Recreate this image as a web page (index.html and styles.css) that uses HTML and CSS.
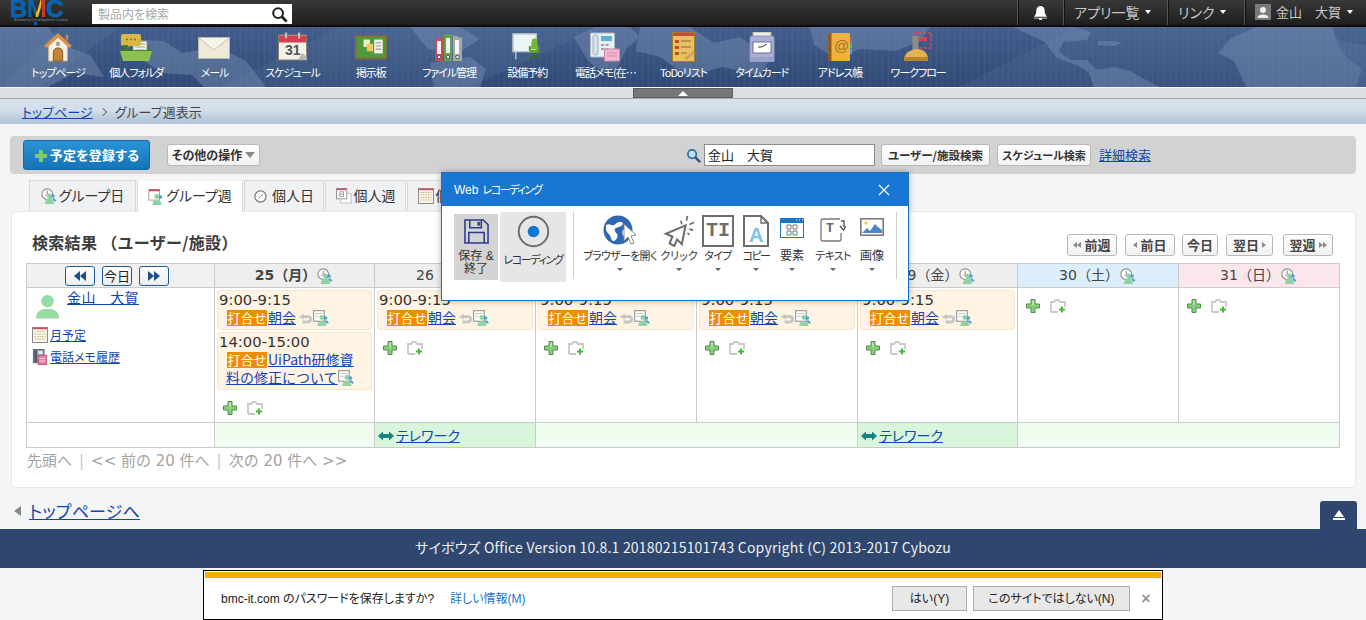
FILE: index.html
```html
<!DOCTYPE html>
<html lang="ja">
<head>
<meta charset="utf-8">
<title>グループ週表示</title>
<link rel="stylesheet" href="styles.css">
</head>
<body>
<svg class="defs" aria-hidden="true">
  <symbol id="i-group-clock" viewBox="0 0 18 18">
    <circle cx="7" cy="7" r="6" fill="#fff" stroke="#8a8a8a" stroke-width="1.2"/>
    <path d="M7 3v4l-2 2" fill="none" stroke="#777" stroke-width="1"/>
    <circle cx="9.5" cy="9" r="2.8" fill="#8fd3a0"/>
    <path d="M4.5 18c0-4 2-5.500 5-5.500s5 1.500 5 5.500z" fill="#8fd3a0"/>
    <circle cx="13.500" cy="9" r="2" fill="#4f9fd4"/>
    <path d="M12 12.500l3-1 2.500 3-2 1z" fill="#4f9fd4"/>
  </symbol>
  <symbol id="i-group-doc" viewBox="0 0 18 18">
    <rect x=".7" y=".7" width="12" height="12" fill="#fff" stroke="#a0a0a0" stroke-width="1.400"/>
    <path d="M2.500 4h8M2.500 7h4" stroke="#bdbdbd"/>
    <circle cx="10" cy="8.500" r="2.800" fill="#8fd3a0"/>
    <path d="M5 18c0-4 2-5.500 5-5.500s5 1.500 5 5.500z" fill="#8fd3a0"/>
    <circle cx="14" cy="9" r="2" fill="#4f9fd4"/>
    <path d="M12.500 12.500l3-1 2.500 3-2 1z" fill="#4f9fd4"/>
  </symbol>
  <symbol id="i-repeat" viewBox="0 0 15 10">
    <path d="M5 2.700h5a2.600 2.600 0 0 1 0 5.300H4.500" fill="none" stroke="#c6c6c6" stroke-width="2.800"/>
    <path d="M6 0v5.400L.5 2.700z" fill="#c6c6c6"/>
  </symbol>
  <symbol id="i-plus" viewBox="0 0 14 14">
    <path d="M5 .5h4v4.500h4.500v4H9v4.500H5V9H.5V5H5z" fill="#8ccb7e" stroke="#4e8f4a"/>
    <path d="M6 1.500h2v4.500H6z" fill="#b7e3a8"/>
  </symbol>
  <symbol id="i-folder-plus" viewBox="0 0 16 14">
    <path d="M1 13V3h3l1.500-2h3L10 3h5v5M1 13h7" fill="none" stroke="#c8c8c8" stroke-width="1.800"/>
    <path d="M9 10.500h6M12 7.500v6" stroke="#49b83f" stroke-width="2"/>
  </symbol>
  <symbol id="i-month" viewBox="0 0 16 16">
    <rect x=".5" y=".5" width="15" height="15" fill="#f8f5e8" stroke="#8c8c8c"/>
    <path d="M1 1.500h14" stroke="#d9485b" stroke-width="1.400"/>
    <path d="M2.500 4.500h11M2.500 7h11M2.500 9.500h11M2.500 12h11" stroke="#c9b98d" stroke-dasharray="1.500 1"/>
  </symbol>
  <symbol id="i-phonememo" viewBox="0 0 16 18">
    <rect x=".5" y=".5" width="12" height="15" fill="#8795a3" stroke="#56616c"/>
    <rect x="1.500" y="1.500" width="3" height="13" fill="#4f5b66"/>
    <rect x="6" y="2" width="5" height="4" fill="#dfe7ef"/>
    <rect x="6" y="7" width="9.500" height="10.500" fill="#e77fa2" stroke="#b8557b"/>
    <path d="M7.500 10.500h6.500M7.500 13.500h6.500" stroke="#fbdde8"/>
  </symbol>
  <symbol id="i-telework" viewBox="0 0 16 10">
    <path d="M0 5l5-4.500V3h6V.500L16 5l-5 4.500V7H5v2.500z" fill="#12857f"/>
  </symbol>
</svg>

<header class="topbar">
  <div class="logo"><div class="logo-mark"><span class="lb">B</span><span class="lm">M</span><span class="lb">C</span></div><div class="logo-sub">Business Development Center</div><i class="logo-dot"></i></div>
  <div class="global-search">
    <span class="gs-text">製品内を検索</span>
    <svg class="gs-icon" viewBox="0 0 18 18"><circle cx="7.500" cy="7.500" r="5.200" fill="none" stroke="#222" stroke-width="2.200"/><path d="M11.500 11.500l5 5" stroke="#222" stroke-width="3"/></svg>
  </div>
  <div class="top-right">
    <div class="top-cell bell"><svg class="bell-icon" viewBox="0 0 16 16"><path d="M8 1c-3 0-4.500 2.500-4.500 5.500 0 3-1 4.500-2.500 6h14c-1.500-1.500-2.500-3-2.500-6C12.500 3.500 11 1 8 1z" fill="#fff"/><path d="M1 13.500h14v1H1zM6.500 14.500h3V16h-3z" fill="#eee"/></svg></div>
    <div class="top-cell apps">アプリ一覧<i class="caret"></i></div>
    <div class="top-cell links">リンク<i class="caret"></i></div>
    <div class="top-cell me"><svg class="me-icon" viewBox="0 0 16 16"><rect width="16" height="16" fill="#7a7a7a"/><circle cx="8" cy="6" r="3" fill="#eee"/><path d="M2.500 14c.5-3 3-3.500 5.500-3.500s5 .5 5.500 3.500z" fill="#eee"/></svg>金山　大賀<i class="caret"></i></div>
  </div>
</header>

<nav class="appnav">
  <svg class="map" viewBox="0 0 1366 60" preserveAspectRatio="none" aria-hidden="true">
    <path d="M220 60L340 0h260L470 60zM960 60L1075 0h340v60zM0 60L60 0h60L40 60z" fill="#6b86ad" opacity=".16"/>
    <g fill="#7d94b8" opacity=".42">
      <path d="M0 0h48l14 18 28 10 14 22-30-4-26 14H0z"/>
      <path d="M128 12l36 2 18 12 36-6 28 14 20 26h-62l-12-12-30-2-24-16z"/>
      <path d="M410 0h50l20 12-22 14-30-4zM430 36l40-6 16 12-6 18h-46z"/>
      <path d="M574 10l22-10h34l10 10-14 12-8 18-14 6-14-10-8-12z"/>
      <path d="M640 0h50l24 16 26-6 30 22-10 16-38-8-34 10-28-20-24-6z"/>
      <path d="M810 0h120l-10 14-24 10-36-2-24 10-22-14z"/>
      <path d="M1013 0h62l16 5-4 8-24 2-4 10 12 8 16 0 10 10 10 6-10 2-18-12-22-8-12-16z"/>
      <path d="M1098 14h16l8 2-8 3-16-1zM1088 44l26-4 16 4 18 10 12 6h-66z"/>
      <path d="M1230 12l26-12h76l6 16 8 14 16 12-6 18h-110l-12-26-16-8z"/>
      <path d="M1326 8l16 6 24 4v42h-22l-10-26z" opacity=".45"/>
    </g>
  </svg>
  <ul class="nav-list">
    <li class="nav-item">
      <svg class="nav-icon" viewBox="0 0 32 32"><path d="M6 14L16 4l10 10v17H6z" fill="#f4efe3" stroke="#c9b48a"/><path d="M1 15L16 1l15 14-3 2L16 6 4 17z" fill="#d9934a"/><path d="M24 3h3v7l-3-3z" fill="#c9843f"/><rect x="14" y="10" width="4" height="5" rx="2" fill="#9c9c9c"/><path d="M11 31V22a5 5 0 0 1 10 0v9z" fill="#c58438" stroke="#7f5420"/></svg>
      <span class="nav-label">トップページ</span></li>
    <li class="nav-item">
      <svg class="nav-icon nav-wide" viewBox="0 0 32 30"><rect x="13" y="9" width="14" height="14" fill="#f5f2df" stroke="#888"/><path d="M15 12h10M15 15h10M15 18h10" stroke="#8aa"/><path d="M3 2h16a2 2 0 0 1 2 2v8a2 2 0 0 1-2 2H10l-3 4v-4H3a2 2 0 0 1-2-2V4a2 2 0 0 1 2-2z" fill="#d9b847"/><circle cx="7" cy="7.500" r="1" fill="#8a6f12"/><circle cx="11" cy="7.500" r="1" fill="#8a6f12"/><circle cx="15" cy="7.500" r="1" fill="#8a6f12"/><path d="M3 13h5l2 5h18v-5h2v5h2l-3 11H3L0 18h3z" fill="#3d7a2a" opacity=".9"/><path d="M0 19h32l-3 10H3z" fill="#8cc152"/></svg>
      <span class="nav-label">個人フォルダ</span></li>
    <li class="nav-item">
      <svg class="nav-icon nav-wide" viewBox="0 0 32 24"><rect x=".5" y="2.500" width="31" height="21" fill="#efe9d8" stroke="#b8b8b0"/><path d="M1 3l15 12L31 3" fill="#f7f3e6" stroke="#c8c2ac"/></svg>
      <span class="nav-label">メール</span></li>
    <li class="nav-item">
      <svg class="nav-icon" viewBox="0 0 30 30"><rect x=".5" y="3" width="28" height="25" fill="#f4f1e6" stroke="#8a7f70"/><rect x="1" y="3.500" width="27" height="7" fill="#d3404f"/><rect x="7" y=".5" width="2" height="6" fill="#ddd" stroke="#777" stroke-width=".5"/><rect x="20" y=".5" width="2" height="6" fill="#ddd" stroke="#777" stroke-width=".5"/><text x="7" y="23" class="svg-31">31</text><path d="M20 28l4-7 5 4v3z" fill="#b5b5b5"/></svg>
      <span class="nav-label">スケジュール</span></li>
    <li class="nav-item">
      <svg class="nav-icon nav-wide" viewBox="0 0 30 24"><rect x=".8" y="1.800" width="28.400" height="21" fill="#4f9a3b" stroke="#8a6a35" stroke-width="1.600"/><rect x="8" y="5" width="6" height="7" fill="#f6ecc6"/><rect x="11" y="9" width="6" height="7" fill="#efc65d"/><rect x="18" y="5" width="8" height="13" fill="#eef1e6"/><path d="M19.500 8h5M19.500 11h5M19.500 14h5" stroke="#999"/></svg>
      <span class="nav-label">掲示板</span></li>
    <li class="nav-item">
      <svg class="nav-icon" viewBox="0 0 30 30"><path d="M1 7l8-2v24H1z" fill="#c94a5e"/><path d="M10 3l8-1v27h-8z" fill="#5da644"/><path d="M19 3l9 3v23h-9z" fill="#a8a8a8"/><path d="M3 9h4v13H3zM12 6h4v15h-4zM21 8h4v14h-4z" fill="#f5f5f5"/><circle cx="5" cy="25" r="1.800" fill="#eee" stroke="#555"/><circle cx="14" cy="25" r="1.800" fill="#eee" stroke="#555"/><circle cx="23.500" cy="25" r="1.800" fill="#eee" stroke="#555"/></svg>
      <span class="nav-label">ファイル管理</span></li>
    <li class="nav-item">
      <svg class="nav-icon" viewBox="0 0 32 30"><rect x="1" y="1" width="25" height="19" fill="#eef3f6" stroke="#b8c3c9" stroke-width="1.500"/><path d="M4 20v8" stroke="#b8c3c9" stroke-width="1.500"/><path d="M21 9a3 3 0 0 1 6 0l1 8h-8z" fill="#6fb92f"/><rect x="18" y="14" width="2" height="5" fill="#4f8f20"/><rect x="28" y="14" width="2" height="5" fill="#4f8f20"/><rect x="19" y="18" width="10" height="3" fill="#5fa326"/><path d="M24 21v5M18 28l6-3 6 3" fill="none" stroke="#356f18" stroke-width="1.500"/></svg>
      <span class="nav-label">設備予約</span></li>
    <li class="nav-item">
      <svg class="nav-icon" viewBox="0 0 30 30"><rect x=".5" y="1" width="24" height="24" rx="1" fill="#e9eff3" stroke="#a9b8c2"/><rect x="3" y="3" width="5" height="20" rx="2" fill="#d7e1e8" stroke="#9eaeb9"/><rect x="11" y="4" width="11" height="5" fill="#5bb0d8"/><path d="M11 12h3v2h-3zM15.500 12h3v2h-3zM11 16h3v2h-3zM15.500 16h3v2h-3z" fill="#93a5b1"/><rect x="14.500" y="17" width="15" height="12" fill="#f4b7cf" stroke="#cf87a6"/><path d="M17 21h10M17 24h10" stroke="#d887aa"/></svg>
      <span class="nav-label">電話メモ(在…</span></li>
    <li class="nav-item">
      <svg class="nav-icon nav-narrow" viewBox="0 0 24 30"><rect x=".5" y=".5" width="22" height="29" fill="#e9c063" stroke="#a67b28"/><rect x="1" y="1" width="21" height="3" fill="#c44848"/><path d="M3 8h4v3H3zM3 14h4v3H3zM3 20h4v3H3z" fill="#c24a2e"/><path d="M9 9h10M9 15h10M9 21h6" stroke="#8a6c2c"/><path d="M12 26l9-7 2 2-8 7z" fill="#c9a563"/></svg>
      <span class="nav-label">ToDoリスト</span></li>
    <li class="nav-item">
      <svg class="nav-icon" viewBox="0 0 30 30"><rect x="6" y="0" width="18" height="9" fill="#f0efe3" stroke="#b0ae9c"/><rect x="3" y="4" width="24" height="26" rx="2" fill="#aab0d4" stroke="#8e95bd"/><rect x="6" y="10" width="18" height="11" fill="#fff" stroke="#6b6f96"/><path d="M15 15l5-3M15 15h-4" stroke="#444"/><rect x="3" y="25" width="24" height="5" fill="#9aa0c8"/></svg>
      <span class="nav-label">タイムカード</span></li>
    <li class="nav-item">
      <svg class="nav-icon" viewBox="0 0 26 30"><rect x="1" y="1" width="22" height="28" rx="1" fill="#efb240"/><rect x="1" y="1" width="3.500" height="28" fill="#8f5e1f"/><rect x="23" y="5" width="2" height="5" fill="#d9534f"/><rect x="23" y="11" width="2" height="5" fill="#5cb85c"/><rect x="23" y="17" width="2" height="5" fill="#5b9bd5"/><text x="7" y="19" class="svg-at">@</text></svg>
      <span class="nav-label">アドレス帳</span></li>
    <li class="nav-item">
      <svg class="nav-icon" viewBox="0 0 30 30"><rect x="11" y="1" width="17" height="15" fill="none" stroke="#d9485b" stroke-width="1.600" stroke-dasharray="3 1.500"/><rect x="14" y="5" width="10" height="4" fill="#c9485b"/><rect x="9.500" y="4" width="6" height="14" fill="#8c8c80"/><path d="M1 29c0-7 4-11 13-12 9 1 11 5 11 12z" fill="#e4b24e"/><rect x="1" y="25" width="24" height="4" fill="#b9852a"/></svg>
      <span class="nav-label">ワークフロー</span></li>
  </ul>
</nav>

<div class="strip"><button class="strip-handle" type="button" aria-label="閉じる"><i></i></button></div>
<div class="crumbs"><a href="#">トップページ</a><span class="crumb-sep"></span><span>グループ週表示</span></div>

<main class="main">
  <section class="toolbar">
    <a class="primary" href="#"><svg class="primary-plus" viewBox="0 0 14 14"><path d="M5 1h4v4h4v4H9v4H5V9H1V5h4z" fill="#7ccb6a"/></svg>予定を登録する</a>
    <button class="btn more" type="button">その他の操作<i class="more-caret"></i></button>
    <div class="tb-search">
      <svg class="tb-mag" viewBox="0 0 16 16"><circle cx="6.500" cy="6.500" r="4.500" fill="#bfe0f5" stroke="#2d6f9f" stroke-width="1.800"/><path d="M10 10l5 5" stroke="#2d4f78" stroke-width="2.600"/></svg>
      <div class="tb-input">金山　大賀</div>
      <button class="btn b-user" type="button">ユーザー/施設検索</button>
      <button class="btn b-sched" type="button">スケジュール検索</button>
      <a class="tb-link" href="#">詳細検索</a>
    </div>
  </section>

  <div class="tabs">
    <div class="tab t1"><svg class="ic16"><use href="#i-group-clock"/></svg><span>グループ日</span></div>
    <div class="tab t2 active"><svg class="ic16" viewBox="0 0 18 18"><rect x="1" y=".5" width="12" height="12" fill="#fff" stroke="#999"/><path d="M1 1.500h12" stroke="#d9485b" stroke-width="2"/><circle cx="10" cy="8.500" r="2.800" fill="#8fd3a0"/><path d="M5 18c0-4 2-5.500 5-5.500s5 1.500 5 5.500z" fill="#8fd3a0"/><circle cx="14" cy="9" r="2" fill="#4f9fd4"/></svg><span>グループ週</span></div>
    <div class="tab t3"><svg class="ic14" viewBox="0 0 14 14"><circle cx="7" cy="7" r="6" fill="#fff" stroke="#7d7d7d" stroke-width="1.400"/><path d="M7 7l3-2.500M7 7l-2 2" stroke="#777"/></svg><span>個人日</span></div>
    <div class="tab t4"><svg class="ic16" viewBox="0 0 17 17"><rect x="5" y="6" width="11" height="10" fill="#fff" stroke="#bbb"/><rect x=".5" y=".5" width="11" height="11" fill="#fff" stroke="#8e8e8e"/><path d="M1 1.500h10" stroke="#d9485b" stroke-width="1.600"/><path d="M4 4v5h4V4zM4 6.500h4" fill="none" stroke="#888" stroke-width=".8"/></svg><span>個人週</span></div>
    <div class="tab t5"><svg class="ic16"><use href="#i-month"/></svg><span>個人月</span></div>
  </div>

  <section class="card">
    <div class="card-head">
      <h2 class="card-title">検索結果 （ユーザー/施設）</h2>
      <div class="date-nav">
        <button class="btn dn w50" type="button"><i class="tri-l dbl"></i>前週</button>
        <button class="btn dn w50 g8" type="button"><i class="tri-l"></i>前日</button>
        <button class="btn dn w36 g7" type="button">今日</button>
        <button class="btn dn w47 g8" type="button">翌日<i class="tri-r"></i></button>
        <button class="btn dn w50 g10" type="button">翌週<i class="tri-r dbl"></i></button>
      </div>
    </div>

    <table class="sched">
      <colgroup><col class="c0"><col class="c1"><col class="c2"><col class="c2"><col class="c2"><col class="c1"><col class="c2"><col class="c2"></colgroup>
      <thead>
        <tr>
          <th class="h-nav">
            <div class="wk-btns">
              <button class="wk" type="button"><i class="wk-l"></i><i class="wk-l"></i></button>
              <button class="wk today" type="button">今日</button>
              <button class="wk" type="button"><i class="wk-r"></i><i class="wk-r"></i></button>
            </div>
          </th>
          <th class="h-day strong">25（月）<svg class="ic16 hic"><use href="#i-group-clock"/></svg></th>
          <th class="h-day">26（火）<svg class="ic16 hic"><use href="#i-group-clock"/></svg></th>
          <th class="h-day">27（水）<svg class="ic16 hic"><use href="#i-group-clock"/></svg></th>
          <th class="h-day">28（木）<svg class="ic16 hic"><use href="#i-group-clock"/></svg></th>
          <th class="h-day">29（金）<svg class="ic16 hic"><use href="#i-group-clock"/></svg></th>
          <th class="h-day sat">30（土）<svg class="ic16 hic"><use href="#i-group-clock"/></svg></th>
          <th class="h-day sun">31（日）<svg class="ic16 hic"><use href="#i-group-clock"/></svg></th>
        </tr>
      </thead>
      <tbody>
        <tr class="r-main">
          <td class="user-cell">
            <div class="user-top">
              <svg class="avatar" viewBox="0 0 24 26"><circle cx="12" cy="8" r="6.500" fill="#95dba5"/><path d="M0 26c0-7 4-9 8-10h8c4 1 8 3 8 10z" fill="#95dba5"/></svg>
              <a class="user-name" href="#">金山　大賀</a>
            </div>
            <div class="user-link"><svg class="ic16"><use href="#i-month"/></svg><a href="#">月予定</a></div>
            <div class="user-link"><svg class="ic16"><use href="#i-phonememo"/></svg><a href="#">電話メモ履歴</a></div>
          </td>
          <td class="day">
            <div class="ev"><div class="ev-time">9:00-9:15</div><div class="ev-body"><span class="tag">打合せ</span><a href="#">朝会</a><svg class="ic-rep"><use href="#i-repeat"/></svg><svg class="ic16"><use href="#i-group-doc"/></svg></div></div>
            <div class="ev"><div class="ev-time">14:00-15:00</div><div class="ev-body"><span class="tag">打合せ</span><a href="#">UiPath研修資料の修正について</a><svg class="ic16"><use href="#i-group-doc"/></svg></div></div>
            <div class="adds"><svg class="ic-plus"><use href="#i-plus"/></svg><svg class="ic-fold"><use href="#i-folder-plus"/></svg></div>
          </td>
          <td class="day">
            <div class="ev"><div class="ev-time">9:00-9:15</div><div class="ev-body"><span class="tag">打合せ</span><a href="#">朝会</a><svg class="ic-rep"><use href="#i-repeat"/></svg><svg class="ic16"><use href="#i-group-doc"/></svg></div></div>
            <div class="adds"><svg class="ic-plus"><use href="#i-plus"/></svg><svg class="ic-fold"><use href="#i-folder-plus"/></svg></div>
          </td>
          <td class="day">
            <div class="ev"><div class="ev-time">9:00-9:15</div><div class="ev-body"><span class="tag">打合せ</span><a href="#">朝会</a><svg class="ic-rep"><use href="#i-repeat"/></svg><svg class="ic16"><use href="#i-group-doc"/></svg></div></div>
            <div class="adds"><svg class="ic-plus"><use href="#i-plus"/></svg><svg class="ic-fold"><use href="#i-folder-plus"/></svg></div>
          </td>
          <td class="day">
            <div class="ev"><div class="ev-time">9:00-9:15</div><div class="ev-body"><span class="tag">打合せ</span><a href="#">朝会</a><svg class="ic-rep"><use href="#i-repeat"/></svg><svg class="ic16"><use href="#i-group-doc"/></svg></div></div>
            <div class="adds"><svg class="ic-plus"><use href="#i-plus"/></svg><svg class="ic-fold"><use href="#i-folder-plus"/></svg></div>
          </td>
          <td class="day">
            <div class="ev"><div class="ev-time">9:00-9:15</div><div class="ev-body"><span class="tag">打合せ</span><a href="#">朝会</a><svg class="ic-rep"><use href="#i-repeat"/></svg><svg class="ic16"><use href="#i-group-doc"/></svg></div></div>
            <div class="adds"><svg class="ic-plus"><use href="#i-plus"/></svg><svg class="ic-fold"><use href="#i-folder-plus"/></svg></div>
          </td>
          <td class="day"><div class="adds"><svg class="ic-plus"><use href="#i-plus"/></svg><svg class="ic-fold"><use href="#i-folder-plus"/></svg></div></td>
          <td class="day"><div class="adds"><svg class="ic-plus"><use href="#i-plus"/></svg><svg class="ic-fold"><use href="#i-folder-plus"/></svg></div></td>
        </tr>
        <tr class="r-banner">
          <td></td>
          <td class="b-pale"></td>
          <td class="b-on"><svg class="ic-tele"><use href="#i-telework"/></svg><a href="#">テレワーク</a></td>
          <td class="b-pale" colspan="2"></td>
          <td class="b-on"><svg class="ic-tele"><use href="#i-telework"/></svg><a href="#">テレワーク</a></td>
          <td class="b-pale" colspan="2"></td>
        </tr>
      </tbody>
    </table>
    <div class="pager">先頭へ<span class="bar">|</span>&lt;&lt; 前の 20 件へ<span class="bar">|</span>次の 20 件へ &gt;&gt;</div>
  </section>

  <div class="back-row">
    <i class="back-tri"></i><a class="back-link" href="#">トップページへ</a>
    <button class="to-top" type="button" aria-label="ページ上部へ"><i></i></button>
  </div>
</main>

<footer class="footer">サイボウズ Office Version 10.8.1 20180215101743 Copyright (C) 2013-2017 Cybozu</footer>

<aside class="recorder">
  <div class="rec-head"><span class="rec-title">Web<span class="tight">レコーディング</span></span>
    <svg class="rec-close" viewBox="0 0 12 12"><path d="M1 1l10 10M11 1L1 11" stroke="#fff" stroke-width="1.100"/></svg>
  </div>
  <div class="rec-body">
    <div class="rec-tool save">
      <svg class="ri-save" viewBox="0 0 26 26"><path d="M1 1h19l5 5v19H1z" fill="none" stroke="#2c3a8c" stroke-width="1.600"/><path d="M6 1v8h12V1M5 25V14h16v11" fill="none" stroke="#2c3a8c" stroke-width="1.600"/><rect x="14" y="3" width="2.500" height="4" fill="#2c3a8c"/></svg>
      <span>保存 &amp;<br>終了</span>
    </div>
    <div class="rec-tool record">
      <svg class="ri-rec" viewBox="0 0 34 34"><circle cx="17" cy="17" r="15.200" fill="none" stroke="#6d6d6d" stroke-width="2"/><circle cx="17" cy="17" r="6" fill="#0f78d0"/></svg>
      <span class="tight">レコーディング</span>
    </div>
    <div class="rec-sep"></div>
    <div class="rec-item w-open"><svg class="ri ri-globe" viewBox="0 0 34 32"><circle cx="15" cy="15" r="14.500" fill="#2d68b0"/><path d="M3 10c4-2 5 1 8 0s3-4 7-3 1 4-2 5-5 1-4 4 4 3 2 7-5 4-6 0-4-5-5-8zM20 15c3-1 6 0 7 2s-2 6-5 5-3-6-2-7z" fill="#fff"/><path d="M21 9l0 17 4-4 3 7 3-1-3-7 5-1z" fill="#fff" stroke="#8a8a8a"/></svg><span class="ri-label cond">ブラウザーを開く</span><i class="dd"></i></div>
    <div class="rec-item w-click"><svg class="ri ri-click" viewBox="0 0 34 34"><path d="M24 11L3 20l7 3-3 7 5 3 3-7 5 5z" fill="#fff" stroke="#6d6d6d" stroke-width="2.200"/><path d="M19 6l1 4M26 1l-1 5M33 8l-5 2M32 16l-4-1M28 21l-2-2" stroke="#6d6d6d" stroke-width="1.800"/></svg><span class="ri-label">クリック</span><i class="dd"></i></div>
    <div class="rec-item w-type"><div class="ri-type"><span>TI</span></div><span class="ri-label cond">タイプ</span><i class="dd"></i></div>
    <div class="rec-item w-copy"><div class="ri-copywrap"><svg class="ri-copy" viewBox="0 0 26 32"><path d="M1 1h17l7 7v23H1z" fill="#fff" stroke="#6d6d6d" stroke-width="2"/><path d="M18 1v7h7" fill="none" stroke="#6d6d6d" stroke-width="1.400"/></svg><span class="ri-a">A</span></div><span class="ri-label tight-2">コピー</span><i class="dd"></i></div>
    <div class="rec-item w-elem"><svg class="ri-win" viewBox="0 0 24 20"><rect x=".5" y=".5" width="23" height="19" fill="#fff" stroke="#2270c2"/><rect width="24" height="5" fill="#1a74c4"/><path d="M7 7h4v4H7zM13 7h4v4h-4zM7 13h4v4H7zM13 13h4v4h-4z" fill="none" stroke="#777"/><path d="M16 2h1M19 2h1M22 2h1" stroke="#fff"/></svg><span class="ri-label big">要素</span><i class="dd"></i></div>
    <div class="rec-item w-text"><div class="ri-textwrap"><svg class="ri-text" viewBox="0 0 26 24"><path d="M20 1H3a2 2 0 0 0-2 2v18a2 2 0 0 0 2 2h16a2 2 0 0 0 2-2v-6" fill="none" stroke="#7a7a7a" stroke-width="1.300"/><path d="M21 3h3v6M20 8l3.500 4L26 8" fill="none" stroke="#555" stroke-width="1.400"/></svg><span class="ri-t">T</span></div><span class="ri-label cond">テキスト</span><i class="dd"></i></div>
    <div class="rec-item w-img"><svg class="ri-pic" viewBox="0 0 24 18"><rect x=".8" y=".8" width="22.400" height="16.400" fill="#fff" stroke="#7a7a7a" stroke-width="1.600"/><circle cx="6" cy="5" r="1.800" fill="#f2c94c"/><path d="M2 15l5-5 3 3 5-7 3 3 4 3v3z" fill="#4f86c6"/></svg><span class="ri-label big">画像</span><i class="dd"></i></div>
    <div class="rec-sep end"></div>
  </div>
</aside>

<aside class="savebar">
  <span class="sb-text">bmc-it.com のパスワードを保存しますか?</span>
  <a class="sb-link" href="#">詳しい情報(M)</a>
  <button class="sb-btn yes" type="button">はい(Y)</button>
  <button class="sb-btn no" type="button">このサイトではしない(N)</button>
  <span class="sb-x">×</span>
</aside>
</body>
</html>
```

FILE: styles.css
```css
* { box-sizing: border-box; }
html, body { margin: 0; padding: 0; height: 620px; overflow: hidden; }
body {
  position: relative;
  background: #f4f5f7;
  color: #333;
  font-family: "Noto Sans CJK JP", "Liberation Sans", sans-serif;
  font-feature-settings: "palt";
  font-size: 13px;
  line-height: 18px;
}
a { color: #0f47b0; text-decoration: underline; }
button { font: inherit; font-feature-settings: inherit; margin: 0; cursor: pointer; }
.defs { width: 0; height: 0; position: absolute; }
ul { list-style: none; margin: 0; padding: 0; }

/* top bar */
.topbar {
  height: 27px;
  display: flex;
  align-items: flex-start;
  background: linear-gradient(#383838, #1e1e1e);
  border-bottom: 2px solid #0c0c0c;
}
.logo { width: 92px; padding-left: 10px; height: 25px; position: relative; }
.logo-mark { font: 900 24px/18px "Liberation Sans", sans-serif; letter-spacing: -.5px; color: #0a62ae; -webkit-text-stroke: .8px #0a62ae; }
.lm { background: linear-gradient(90deg, #0a62ae 45%, #eebc1d 45% 72%, #c8392b 72%); -webkit-background-clip: text; background-clip: text; color: transparent; -webkit-text-stroke: 0; }
.logo-sub { font: 4px/4px "Liberation Sans", sans-serif; color: #7f8fa8; padding-left: 4px; white-space: nowrap; }
.logo-dot { position: absolute; left: 34px; top: 22px; width: 3px; height: 3px; background: #0a62ae; }
.global-search { width: 200px; height: 20px; margin-top: 4px; background: #fff; display: flex; align-items: center; justify-content: space-between; padding: 0 4px 0 6px; }
.gs-text { color: #a8a8a8; font-size: 12px; }
.gs-icon { width: 17px; height: 17px; }
.top-right { margin-left: auto; display: flex; height: 25px; color: #c8c8c8; font-size: 14px; }
.top-cell { display: flex; align-items: center; height: 25px; border-left: 1px solid #555; box-shadow: inset 1px 0 0 #111; padding: 0 0 2px 10px; }
.bell { width: 46px; justify-content: center; padding: 0; }
.bell-icon { width: 15px; height: 15px; }
.apps { width: 104px; }
.links { width: 77px; }
.me { width: 122px; font-size: 13px; }
.me-icon { width: 16px; height: 16px; margin-right: 5px; }
.caret { width: 0; height: 0; margin-left: 6px; border: 3px solid transparent; border-top: 4px solid #fff; border-bottom: 0; }

/* app nav */
.appnav {
  position: relative;
  height: 60px;
  overflow: hidden;
  background:
    repeating-linear-gradient(90deg, rgba(255,255,255,.045) 0 1px, transparent 1px 6px),
    linear-gradient(#435e8d, #304a77);
}
.map { position: absolute; inset: 0; width: 100%; height: 60px; }
.nav-list { position: relative; display: flex; padding-left: 19px; }
.nav-item { width: 78.200px; height: 60px; display: flex; flex-direction: column; align-items: center; padding-top: 5px; }
.nav-icon { display: block; width: 30px; height: 30px; margin-bottom: 2px; }
.nav-wide { width: 32px; }
.nav-narrow { width: 24px; }
.nav-label { color: #fff; font-size: 11px; line-height: 16px; letter-spacing: -1px; white-space: nowrap; }
.svg-31 { font: 700 14px "Liberation Sans", sans-serif; fill: #555; }
.svg-at { font: 400 15px "Liberation Sans", sans-serif; fill: #a8741c; }

.strip { height: 12px; background: #dde0e2; border-top: 1px solid #f4f5f5; border-bottom: 1px solid #a9acaf; display: flex; justify-content: center; }
.strip-handle { width: 100px; height: 10px; padding: 0; border: 1px solid #5e5e5e; background: #777; display: flex; align-items: center; justify-content: center; }
.strip-handle i { width: 0; height: 0; border: 5px solid transparent; border-top: 0; border-bottom: 5px solid #fff; }

.crumbs {
  height: 25px;
  padding-left: 22px;
  display: flex;
  align-items: center;
  font-size: 13px;
  color: #444;
  background: linear-gradient(#d8e1ec, #d3deea 45%, #b9cadb 80%, #b5c6d8);
}
.crumb-sep { width: 6px; height: 6px; margin: 0 9px 0 7px; border-top: 1px solid #777; border-right: 1px solid #777; transform: rotate(45deg); }

/* main */
.main { padding: 12px 10px 0; }
.toolbar { height: 38px; background: #d2d2d2; border-radius: 4px; display: flex; align-items: center; padding-left: 13px; }
.primary { width: 127px; height: 30px; display: flex; align-items: center; justify-content: center; color: #fff; font-weight: 700; font-size: 13px; letter-spacing: .2px; text-decoration: none; border: 1px solid #1567a8; border-radius: 3px; background: linear-gradient(#2a93d6, #1474b8); }
.primary-plus { width: 14px; height: 14px; margin: 2px 2px 0 0; }
.btn { height: 22px; padding: 0 5px; white-space: nowrap; display: inline-flex; align-items: center; justify-content: center; color: #333; font-size: 12px; font-weight: 700; border: 1px solid #b9b9b9; border-radius: 3px; background: linear-gradient(#fff, #f2f2f2); }
.more { width: 93px; margin-left: 17px; }
.more-caret { width: 0; height: 0; margin-left: 3px; border: 5px solid transparent; border-top: 6px solid #8a8a8a; border-bottom: 0; }
.tb-search { margin-left: 426px; display: flex; align-items: center; }
.tb-mag { width: 15px; height: 15px; margin-right: 3px; }
.tb-input { width: 171px; height: 22px; padding-left: 3px; background: #fff; border: 1px solid #8b8b8b; font-size: 13px; line-height: 20px; color: #222; margin-right: 6px; }
.b-user { width: 109px; font-size: 11.500px; padding: 0; }
.b-sched { width: 94px; margin-left: 7px; font-size: 11px; padding: 0; }
.tb-link { margin-left: 8px; font-size: 13px; }

.tabs { display: flex; height: 31px; margin: 6px 0 0 19px; position: relative; z-index: 1; }
.tab { height: 31px; display: flex; align-items: center; justify-content: center; background: #f0f1f2; border: 1px solid #d8d8d8; border-bottom: 0; font-size: 14px; color: #333; white-space: nowrap; margin-right: 1px; gap: 2px; }
.tab span { margin-top: -3px; }
.tab.active { background: #fff; height: 32px; border-top-color: #f4f5f7; }
.t1 { width: 107px; } .t2 { width: 106px; } .t3 { width: 80px; } .t4 { width: 81px; } .t5 { width: 81px; }
.ic16 { width: 16px; height: 16px; flex: none; }
.ic14 { width: 13px; height: 13px; flex: none; margin-right: 3px; }

.card { margin-left: 1px; height: 277px; background: #fff; border: 1px solid #e8e8e8; border-radius: 5px; padding: 0 14px; }
.card-head { height: 51px; display: flex; justify-content: space-between; align-items: flex-start; }
.card-title { margin: 20px 0 0 6px; font-size: 16px; letter-spacing: .3px; line-height: 20px; font-weight: 700; color: #3c3c3c; font-feature-settings: normal; white-space: nowrap; }
.date-nav { display: flex; margin-top: 22px; margin-right: 8px; }
.dn { height: 22px; padding: 0; gap: 3px; font-size: 13px; font-weight: 700; color: #444; }
.w50 { width: 50px; } .w36 { width: 36px; } .w47 { width: 47px; }
.g7 { margin-left: 7px; } .g8 { margin-left: 8px; } .g10 { margin-left: 10px; }
.tri-l, .tri-r { width: 0; height: 0; border: 3px solid transparent; }
.tri-l { border-right: 4px solid #888; border-left: 0; }
.tri-r { border-left: 4px solid #888; border-right: 0; }
.tri-l.dbl { position: relative; margin-left: 4px; }
.tri-l.dbl::before { content: ""; position: absolute; left: -4px; top: -3px; border: 3px solid transparent; border-right: 4px solid #888; border-left: 0; }
.tri-r.dbl { position: relative; margin-right: 4px; }
.tri-r.dbl::after { content: ""; position: absolute; left: 0; top: -3px; border: 3px solid transparent; border-left: 4px solid #888; border-right: 0; }

.sched { width: 1314px; table-layout: fixed; border-collapse: collapse; font-size: 14px; }
.c0 { width: 188px; } .c1 { width: 160px; } .c2 { width: 161px; }
.sched th, .sched td { border: 1px solid #cacaca; padding: 0; }
.sched thead tr { height: 24px; }
.h-nav { background: #f1f1f1; }
.sched .h-day { padding-bottom: 2px; background: #eeeeee; font-family: "DejaVu Sans", "Noto Sans CJK JP", sans-serif; font-feature-settings: normal; font-weight: 400; font-size: 14px; color: #444; text-align: center; white-space: nowrap; }
.sched .h-day.strong { font-weight: 700; }
.sched .h-day.sat { background: #dcedfb; }
.sched .h-day.sun { background: #fbe6ec; }
.hic { vertical-align: -4px; margin: 0 1px; }
.wk-btns { display: flex; gap: 7px; padding-left: 38px; }
.wk { width: 30px; height: 20px; padding: 0; display: flex; align-items: center; justify-content: center; font-size: 13px; font-weight: 400; line-height: 17px; color: #222; border: 1px solid #1d5a92; border-radius: 3px; background: linear-gradient(#fff, #ececec); }
.wk-l, .wk-r { width: 0; height: 0; border: 5px solid transparent; }
.wk-l { border-right: 6px solid #1d4f86; border-left: 0; }
.wk-r { border-left: 6px solid #1d4f86; border-right: 0; }
.r-main { height: 135px; vertical-align: top; }
.r-banner { height: 25px; }
.user-cell { padding: 0 0 0 5px !important; }
.user-top { height: 39px; display: flex; padding-left: 4px; }
.avatar { width: 23px; height: 26px; margin: 5px 8px 0 0; flex: none; }
.user-name { font-size: 14px; line-height: 18px; margin-top: 0; letter-spacing: .4px; }
.user-link { height: 22px; display: flex; align-items: flex-start; font-size: 12px; line-height: 15px; }
.user-link a { margin-left: 2px; }
.day { padding: 2px !important; }
.ev { background: #fff3e3; border: 1px solid #fbe6cb; border-radius: 3px; padding: 0 0 3px 1px; margin-bottom: 2px; color: #333; font-feature-settings: normal; font-size: 14px; line-height: 18px; }
.ev-time { font-family: "DejaVu Sans", "Noto Sans CJK JP", sans-serif; font-size: 14.800px; height: 17px; line-height: 17px; }
.ev-body { padding: 0 13px 0 7px; line-height: 18px; }
.ev-body svg { vertical-align: -3px; }
.tag { background: #ef8c00; color: #fff; font-size: 13px; margin: 0 1px 0 1px; line-height: 16px; display: inline-block; width: 40px; text-align: center; }
.ic-rep { width: 15px; height: 10px; margin-left: 2px; vertical-align: -1px !important; }
.adds { display: flex; align-items: center; padding: 9px 0 0 6px; }
.ic-plus { width: 14px; height: 14px; flex: none; }
.ic-fold { width: 16px; height: 14px; flex: none; margin-left: 10px; }
.b-pale { background: #f0fdf0; }
.b-on { background: #d9f5dc; padding-left: 3px !important; }
.ic-tele { width: 16px; height: 10px; margin-right: 2px; }
.pager { margin: 3px 0 0 1px; font-family: "DejaVu Sans", "Noto Sans CJK JP", sans-serif; font-size: 15px; line-height: 20px; color: #a3a3a3; white-space: nowrap; font-feature-settings: normal; }
.bar { margin: 0 7px; color: #c8c8c8; }

.back-row { height: 41px; position: relative; display: flex; align-items: flex-start; padding: 13px 0 0 4px; }
.back-tri { width: 0; height: 0; margin: 5px 8px 0 0; border: 5px solid transparent; border-right: 7px solid #888; border-left: 0; }
.back-link { font-size: 17px; letter-spacing: .2px; line-height: 20px; }
.to-top { position: absolute; right: -1px; bottom: 0; width: 37px; height: 28px; padding: 0; border: 0; border-radius: 3px 3px 0 0; background: #2f476f; display: flex; flex-direction: column; align-items: center; justify-content: center; }
.to-top i { width: 12px; height: 9px; background: linear-gradient(#fff, #fff) bottom/12px 2px no-repeat; position: relative; }
.to-top i::before { content: ""; position: absolute; left: 1px; top: -1px; border: 5px solid transparent; border-top: 0; border-bottom: 7px solid #fff; }

.footer { height: 39px; background: #2f476f; color: #f0f0f0; font-size: 14px; letter-spacing: .2px; line-height: 36px; text-align: center; }

/* recorder window */
.recorder { position: absolute; left: 441px; top: 172px; width: 468px; height: 129px; background: #fff; border: 1px solid #1a6fc0; box-shadow: 0 0 6px rgba(0,0,0,.3); z-index: 5; font-family: "Liberation Sans", "Noto Sans CJK JP", sans-serif; }
.rec-head { height: 33px; background: #1976d2; color: #fff; font-size: 12px; display: flex; align-items: center; justify-content: space-between; padding: 0 18px 0 12px; }
.rec-title { display: flex; gap: 4px; align-items: center; }
.rec-close { width: 12px; height: 12px; }
.tight { font-size: 11px; letter-spacing: -1.400px; white-space: nowrap; }
.rec-body { display: flex; align-items: flex-start; position: relative; padding: 6px 0 0 12px; color: #333; font-size: 11px; line-height: 13px; }
.rec-tool { display: flex; flex-direction: column; align-items: center; text-align: center; }
.rec-tool.save { width: 44px; height: 66px; margin-top: 2px; background: #d4d4d4; padding-top: 5px; font-size: 12px; }
.ri-save { width: 25px; height: 25px; margin-bottom: 6px; }
.rec-tool.record { width: 66px; height: 70px; margin-left: 2px; background: #e6e6e6; padding-top: 3px; }
.ri-rec { width: 33px; height: 33px; margin-bottom: 6px; }
.rec-sep { width: 1px; height: 67px; margin: 0 9px 0 7px; background: #cfcfcf; }
.rec-sep.end { margin: 0; position: absolute; left: 454px; top: 6px; }
.rec-item { display: flex; flex-direction: column; align-items: center; height: 70px; padding-top: 3px; white-space: nowrap; flex: none; }
.ri { display: block; height: 32px; margin-bottom: 2px; }
.ri-label { line-height: 14px; font-size: 11px; }
.ri-label.cond { letter-spacing: -.7px; }
.ri-label.tight-2 { letter-spacing: -1.500px; }
.ri-label.big { font-size: 12px; }
.dd { width: 0; height: 0; margin-top: 5px; border: 3px solid transparent; border-top: 3px solid #666; border-bottom: 0; }
.w-open { width: 74px; } .ri-globe { width: 34px; }
.w-click { width: 38px; margin-left: 3px; } .ri-click { width: 32px; }
.w-type { width: 40px; }
.ri-type { width: 32px; height: 32px; margin-bottom: 2px; border: 2.500px solid #6d6d6d; display: flex; align-items: center; justify-content: center; }
.ri-type span { font: 700 20px/24px "Liberation Mono", monospace; color: #6d6d6d; }
.w-copy { width: 36px; }
.ri-copywrap { width: 26px; height: 32px; margin-bottom: 2px; position: relative; }
.ri-copy { width: 26px; height: 32px; display: block; }
.ri-a { position: absolute; left: 6px; top: 10px; font: 700 20px/20px "Liberation Sans", sans-serif; color: #7cc0ec; }
.w-elem { width: 36px; } .ri-win { width: 24px; height: 20px; margin: 3px 0 11px; }
.w-text { width: 46px; }
.ri-textwrap { width: 26px; height: 24px; margin: 3px 0 7px; position: relative; }
.ri-text { width: 26px; height: 24px; display: block; }
.ri-t { position: absolute; left: 6px; top: 4px; font: 700 13px/14px "Liberation Mono", monospace; color: #666; }
.w-img { width: 32px; } .ri-pic { width: 24px; height: 18px; margin: 3px 0 13px; }

/* save password bar */
.savebar { position: absolute; left: 203px; top: 570px; width: 960px; height: 50px; background: #fff; border: 1px solid #000; z-index: 6; display: flex; align-items: center; padding: 7px 0 0 17px; font-family: "Liberation Sans", "Noto Sans CJK JP", sans-serif; font-size: 12px; color: #222; }
.savebar::before { content: ""; position: absolute; left: 1px; right: 1px; top: 1px; height: 6px; background: #f0b000; }
.sb-text { width: 229px; white-space: nowrap; }
.sb-link { color: #1a73d0; text-decoration: none; }
.sb-btn { height: 25px; border: 1px solid #ababab; background: #e8e8e8; color: #222; font-size: 12px; padding: 0; }
.yes { width: 75px; margin-left: auto; }
.no { width: 157px; margin-left: 6px; }
.sb-x { width: 32px; text-align: center; color: #999; font-weight: 700; font-size: 16px; }
```
